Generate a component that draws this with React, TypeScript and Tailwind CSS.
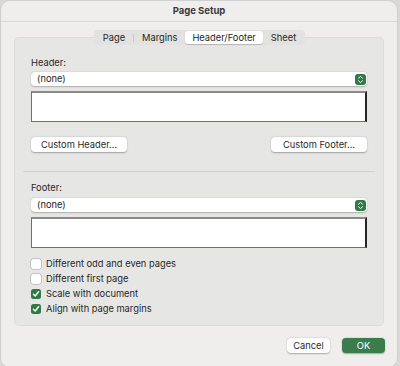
import React from "react";

const tabs = ["Page", "Margins", "Header/Footer", "Sheet"];

const options = [
  { label: "Different odd and even pages", checked: false },
  { label: "Different first page", checked: false },
  { label: "Scale with document", checked: true },
  { label: "Align with page margins", checked: true },
];

function Stepper() {
  return (
    <div className="w-[11px] h-[11px] rounded-[3px] bg-[#2f7a45] flex items-center justify-center">
      <svg width="7" height="9" viewBox="0 0 7 9" fill="none">
        <path d="M1.5 3.2L3.5 1.4L5.5 3.2" stroke="white" strokeWidth="1" strokeLinecap="round" strokeLinejoin="round" />
        <path d="M1.5 5.8L3.5 7.6L5.5 5.8" stroke="white" strokeWidth="1" strokeLinecap="round" strokeLinejoin="round" />
      </svg>
    </div>
  );
}

function Select() {
  return (
    <div className="h-[14px] rounded-[4px] bg-white shadow-[0_0.5px_1.5px_rgba(0,0,0,0.25)] flex items-center justify-between pl-[6px] pr-[1px]">
      <span>(none)</span>
      <Stepper />
    </div>
  );
}

function TextBox() {
  return (
    <div className="h-[31px] bg-white border border-[#6f6f6f] border-t-2 border-t-[#8a8a8a] border-r-2 border-r-[#262626]" />
  );
}

function PushButton({ label, className = "" }: { label: string; className?: string }) {
  return (
    <button
      className={
        "h-[15px] rounded-[4px] bg-white shadow-[0_0.5px_1.5px_rgba(0,0,0,0.3)] flex items-center justify-center text-[#2a2a2a] " +
        className
      }
    >
      {label}
    </button>
  );
}

function Checkbox({ checked }: { checked: boolean }) {
  if (checked) {
    return (
      <div className="w-[10px] h-[10px] rounded-[2.5px] bg-[#2f7a45] flex items-center justify-center">
        <svg width="8" height="8" viewBox="0 0 8 8" fill="none">
          <path d="M1.4 4.2L3.2 6L6.6 1.8" stroke="white" strokeWidth="1.4" strokeLinecap="round" strokeLinejoin="round" />
        </svg>
      </div>
    );
  }
  return <div className="w-[10px] h-[10px] rounded-[2.5px] bg-white shadow-[0_0_0_0.5px_rgba(0,0,0,0.3)]" />;
}

export default function App() {
  return (
    <div className="w-[400px] h-[366px] bg-[#d8d8d8] overflow-hidden" style={{ fontFamily: "Inter, 'Liberation Sans', sans-serif" }}>
      <div className="w-[398px] h-[368px] rounded-[10px] bg-[#efeeed] border border-[#cfcfcf] flex flex-col text-[9.3px] text-[#262626]">
        {/* Title bar */}
        <div className="h-[21px] shrink-0 border-b border-[#d9d9d9] flex items-center justify-center font-bold text-[9.5px] text-[#3a3a3a]">
          Page Setup
        </div>

        {/* Tabs */}
        <div className="relative z-10 mt-[8px] flex justify-center">
          <div className="h-[15px] ml-[1px] rounded-[4px] bg-[#e2e2e1] flex items-center p-[1px] text-[#262626]">
            {tabs.map((t, i) => (
              <React.Fragment key={t}>
                {i === 1 && <div className="w-px h-[8px] bg-[#c9c9c9]" />}
                <div
                  className={
                    t === "Header/Footer"
                      ? "h-[13px] px-[7px] rounded-[3px] bg-white shadow-[0_0.5px_1px_rgba(0,0,0,0.2)] flex items-center"
                      : "h-[13px] px-[8px] flex items-center"
                  }
                >
                  {t}
                </div>
              </React.Fragment>
            ))}
          </div>
        </div>

        {/* Group box */}
        <div className="mx-[13px] -mt-[8px] h-[289px] rounded-[5px] bg-[#e6e6e5] border border-[#dcdcdb] px-[16px] pt-[18px] flex flex-col">
          <div className="h-[14px] flex items-center">Header:</div>
          <div className="mt-[2px]">
            <Select />
          </div>
          <div className="mt-[5px]">
            <TextBox />
          </div>
          <div className="mt-[15px] flex justify-between">
            <PushButton label="Custom Header..." className="w-[96px]" />
            <PushButton label="Custom Footer..." className="w-[96px]" />
          </div>
          <div className="mt-[19px] -mx-[8px] h-px bg-[#d2d2d1]" />
          <div className="mt-[9px] h-[14px] flex items-center">Footer:</div>
          <div className="mt-[3px]">
            <Select />
          </div>
          <div className="mt-[5px]">
            <TextBox />
          </div>
          <div className="mt-[8px] flex flex-col">
            {options.map((o) => (
              <div key={o.label} className="h-[15px] flex items-center gap-[5px]">
                <Checkbox checked={o.checked} />
                <span>{o.label}</span>
              </div>
            ))}
          </div>
        </div>

        {/* Footer buttons */}
        <div className="mt-[12px] pr-[12px] flex justify-end gap-[12px]">
          <button className="w-[43px] h-[15px] rounded-[4px] bg-white shadow-[0_0.5px_1.5px_rgba(0,0,0,0.3)] flex items-center justify-center text-[#2a2a2a]">
            Cancel
          </button>
          <button className="w-[43px] h-[15px] rounded-[4px] bg-[#3a7d4b] shadow-[0_0.5px_1.5px_rgba(0,0,0,0.3)] flex items-center justify-center text-white">
            OK
          </button>
        </div>
      </div>
    </div>
  );
}
